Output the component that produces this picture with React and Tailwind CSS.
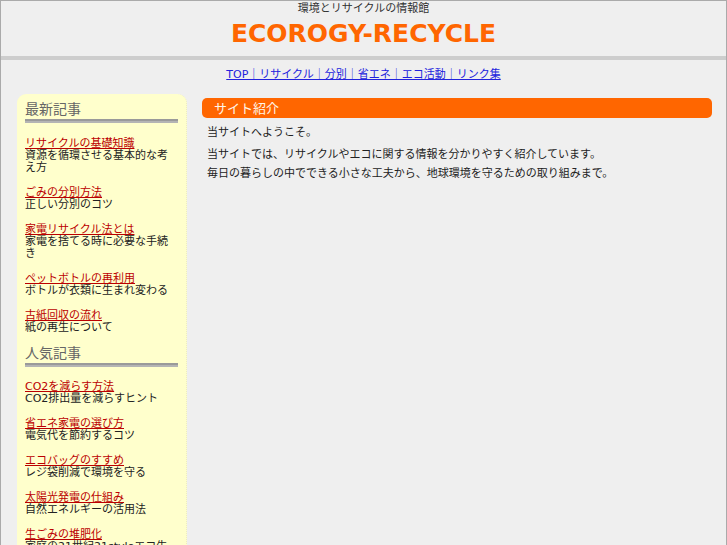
import React from "react";

const latest = [
  { title: "リサイクルの基礎知識", text: "資源を循環させる基本的な考え方" },
  { title: "ごみの分別方法", text: "正しい分別のコツ" },
  { title: "家電リサイクル法とは", text: "家電を捨てる時に必要な手続き" },
  { title: "ペットボトルの再利用", text: "ボトルが衣類に生まれ変わる" },
  { title: "古紙回収の流れ", text: "紙の再生について" },
];

const popular = [
  { title: "CO2を減らす方法", text: "CO2排出量を減らすヒント" },
  { title: "省エネ家電の選び方", text: "電気代を節約するコツ" },
  { title: "エコバッグのすすめ", text: "レジ袋削減で環境を守る" },
  { title: "太陽光発電の仕組み", text: "自然エネルギーの活用法" },
  { title: "生ごみの堆肥化", text: "家庭の21世紀21styleエコ生活" },
];

function SideHeading({ children }) {
  return (
    <div>
      <div className="text-[14px] leading-[16px] text-[#666]">{children}</div>
      <div className="mt-[2px] h-[2px] bg-[#9a9a9a]" />
      <div className="h-[2px] bg-[#b4b4b4]" />
    </div>
  );
}

function Entry({ item }) {
  return (
    <div className="mt-[13px] text-[11px] leading-[12px]">
      <a href="#" className="text-[#bb0000] underline">
        {item.title}
      </a>
      <div className="text-[#222]">{item.text}</div>
    </div>
  );
}

export default function App() {
  return (
    <div
      className="min-h-[545px] bg-[#efefef] border-x border-t border-[#aaaaaa]"
      style={{ fontFamily: '"DejaVu Sans", "Noto Sans CJK JP", sans-serif' }}
    >
      {/* header */}
      <div className="pt-[2px] text-center">
        <div className="text-[11px] leading-[12px] text-[#333]">
          環境とリサイクルの情報館
        </div>
        <div className="mt-[4px] text-[25px] leading-[30px] font-bold text-[#ff6600]">
          ECOROGY-RECYCLE
        </div>
      </div>
      <div className="mt-[7px] h-[4px] bg-[#cdcdcd]" />
      <div className="mt-[9px] text-center text-[11px] leading-[12px]">
        <a href="#" className="text-[#2222dd] underline">
          TOP｜リサイクル｜分別｜省エネ｜エコ活動｜リンク集
        </a>
      </div>

      {/* body */}
      <div className="mt-[13px] flex items-start">
        <div className="ml-4 w-[170px] rounded-t-[9px] bg-[#ffffcc] border-r border-dotted border-[#ecebc4] px-2 pt-[7px] pb-10">
          <SideHeading>最新記事</SideHeading>
          <div className="pt-[2px]">
            {latest.map((item) => (
              <Entry key={item.title} item={item} />
            ))}
          </div>
          <div className="mt-[11px]">
            <SideHeading>人気記事</SideHeading>
          </div>
          <div className="pt-px">
            {popular.map((item) => (
              <Entry key={item.title} item={item} />
            ))}
          </div>
        </div>

        <div className="ml-[15px] w-[510px] pt-[4px]">
          <div className="h-[20px] rounded-[5px] bg-[#ff6600] pl-3 text-[13px] leading-[21px] text-[#fff6ea]">
            サイト紹介
          </div>
          <div className="mt-[8px] px-[5px] text-[11px] leading-[14px] text-[#222]">
            <div>当サイトへようこそ。</div>
            <div className="mt-[8px]">
              当サイトでは、リサイクルやエコに関する情報を分かりやすく紹介しています。
            </div>
            <div className="mt-[5px]">
              毎日の暮らしの中でできる小さな工夫から、地球環境を守るための取り組みまで。
            </div>
          </div>
        </div>
      </div>
    </div>
  );
}
